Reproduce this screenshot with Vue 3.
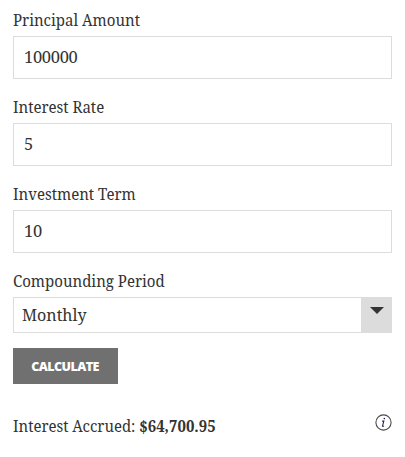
<script setup>
import { ref } from 'vue'

const fields = ref([
  { id: 'principal', label: 'Principal Amount', value: '100000' },
  { id: 'rate', label: 'Interest Rate', value: '5' },
  { id: 'term', label: 'Investment Term', value: '10' },
])
const period = ref('Monthly')
</script>

<template>
  <form class="calculator" @submit.prevent>
    <div v-for="f in fields" :key="f.id" class="field">
      <label class="label" :for="f.id">{{ f.label }}</label>
      <input :id="f.id" v-model="f.value" class="input" type="text" />
    </div>
    <div class="field period-field">
      <span class="label">Compounding Period</span>
      <div class="select">
        <span class="value">{{ period }}</span>
        <span class="toggle">
          <svg width="14" height="7" viewBox="0 0 14 7"><path d="M0 0H14L7 7Z" fill="#333" /></svg>
        </span>
      </div>
    </div>
    <button class="button" type="submit">CALCULATE</button>
    <div class="result">
      <span class="text">Interest Accrued: <strong>$64,700.95</strong></span>
      <svg class="info" width="17" height="17" viewBox="0 0 17 17">
        <circle cx="8.5" cy="8.5" r="7.6" fill="none" stroke="#4a4a4a" stroke-width="1.1" />
        <circle cx="9.3" cy="4.6" r="0.8" fill="#1c1c50" />
        <path d="M7.1 7.1H8.8L7.5 12.2H9.1" fill="none" stroke="#252550" stroke-width="1.1" />
      </svg>
    </div>
  </form>
</template>

<style>
body {
  background: #fff;
}
</style>

<style scoped>
.calculator {
  box-sizing: border-box;
  width: 405px;
  height: 457px;
  padding: 9px 13px 0;
  color: #333;
  font-family: "Noto Serif", "Droid Serif", "DejaVu Serif Condensed", "DejaVu Serif", serif;
  font-size: 16px;
}
.field {
  display: flex;
  flex-direction: column;
  height: 87px;
}
.label {
  height: 27px;
  margin-left: 0.4px;
  line-height: 22px;
  white-space: nowrap;
  transform: scaleX(0.938);
  transform-origin: left;
}
.input {
  box-sizing: border-box;
  width: 379px;
  height: 43px;
  padding: 0 10px 2px;
  border: 1px solid #dcdcdc;
  border-radius: 0;
  background: #fff;
  color: #333;
  font: inherit;
  font-size: 16.5px;
  letter-spacing: -0.3px;
  outline: none;
}
.period-field {
  height: 78px;
}
.select {
  box-sizing: border-box;
  display: flex;
  justify-content: space-between;
  width: 379px;
  height: 36px;
  border: 1px solid #dcdcdc;
}
.value {
  margin-left: 8px;
  font-size: 17px;
  line-height: 33px;
  transform: scaleX(0.945);
  transform-origin: left;
}
.toggle {
  box-sizing: border-box;
  display: flex;
  justify-content: center;
  width: 30px;
  padding: 9px 0 0 2px;
  background: #dcdcdc;
}
.button {
  display: block;
  width: 105px;
  height: 36px;
  padding: 1px 1px 0 0;
  border: 0;
  background: #707070;
  color: #fff;
  font: 800 12.5px/35px "Open Sans", sans-serif;
  letter-spacing: -0.55px;
}
.result {
  display: flex;
  justify-content: space-between;
  padding-top: 30px;
}
.text {
  margin-left: 0.4px;
  line-height: 25px;
  white-space: nowrap;
  transform: scaleX(0.935);
  transform-origin: left;
}
</style>
